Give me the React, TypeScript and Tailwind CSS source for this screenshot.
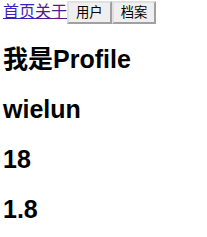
export default function App() {
  const h2 = "text-[25px] font-bold leading-[30px] my-[20px]";
  return (
    <div className="text-black bg-white pl-[3px]" style={{ fontFamily: '"Liberation Sans", "Noto Sans CJK SC", sans-serif' }}>
      <div className="text-[16px] leading-[18px] h-[23px] pt-[1px]">
        <a href="#" className="text-[#3b1fc0] underline">首页</a>
        <a href="#" className="text-[#551a8b] underline">关于</a>
        <button className="text-[13.33px] leading-[15px] px-[7px] py-[2px] border-2 border-[#e0e0e0] border-r-[#a0a0a0] border-b-[#a0a0a0] bg-[#efefef] align-baseline">用户</button>
        <button className="text-[13.33px] leading-[15px] px-[7px] py-[2px] border-2 border-[#e0e0e0] border-r-[#a0a0a0] border-b-[#a0a0a0] bg-[#efefef] align-baseline">档案</button>
      </div>
      <div className="pt-[1px]">
        <h2 className={h2}>我是Profile</h2>
        <h2 className={h2}>wielun</h2>
        <h2 className={h2}>18</h2>
        <h2 className={h2}>1.8</h2>
      </div>
    </div>
  );
}
